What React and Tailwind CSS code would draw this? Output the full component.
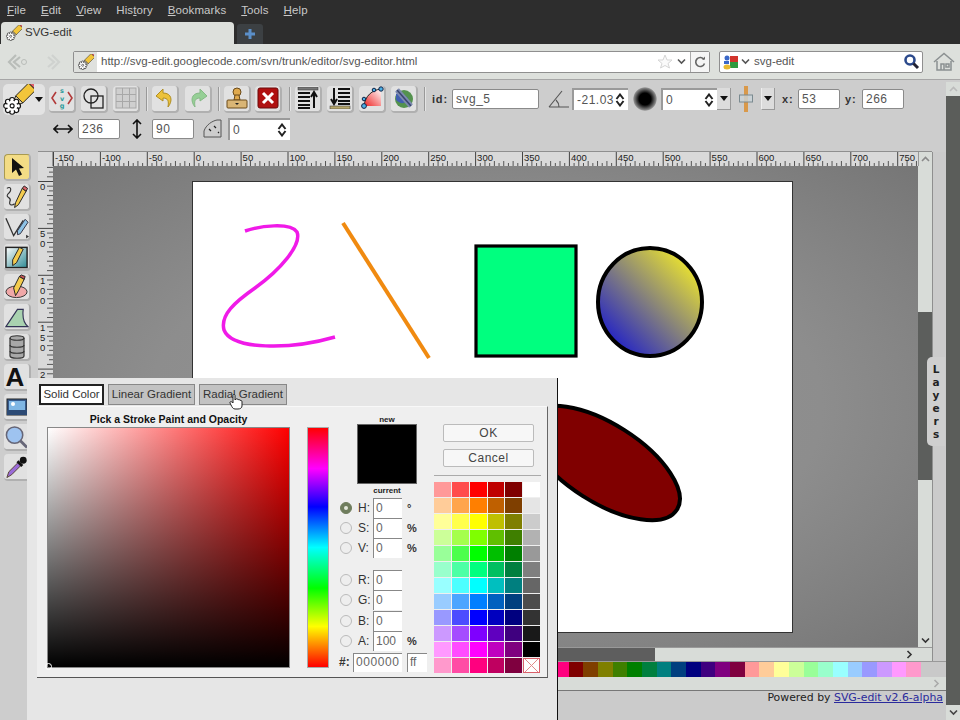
import React from "react";

const DEJAVU = "[font-family:DejaVu_Sans,sans-serif]";
const SANS = "[font-family:Liberation_Sans,Arial,sans-serif]";
const ARIAL = SANS;

const quick = [
  ["#ff9999","#ff4c4c","#ff0000","#bf0000","#7f0000","#ffffff"],
  ["#ffcc99","#ffa54c","#ff7f00","#bf6000","#7f3f00","#e5e5e5"],
  ["#ffff99","#ffff4c","#ffff00","#bfbf00","#7f7f00","#cccccc"],
  ["#ccff99","#a5ff4c","#7fff00","#60bf00","#3f7f00","#b2b2b2"],
  ["#99ff99","#4cff4c","#00ff00","#00bf00","#007f00","#999999"],
  ["#99ffcc","#4cffa5","#00ff7f","#00bf60","#007f3f","#7f7f7f"],
  ["#99ffff","#4cffff","#00ffff","#00bfbf","#007f7f","#666666"],
  ["#99ccff","#4ca5ff","#007fff","#0060bf","#003f7f","#4c4c4c"],
  ["#9999ff","#4c4cff","#0000ff","#0000bf","#00007f","#333333"],
  ["#cc99ff","#a54cff","#7f00ff","#6000bf","#3f007f","#191919"],
  ["#ff99ff","#ff4cff","#ff00ff","#bf00bf","#7f007f","#000000"],
  ["#ff99cc","#ff4ca5","#ff007f","#bf0060","#7f003f",null],
];

const paletteColors = ["#ff007f","#7f0000","#7f3f00","#7f7f00","#3f7f00","#007f00","#007f3f","#007f7f","#003f7f","#00007f","#3f007f","#7f007f","#7f003f","#ff9999","#ffcc99","#ffff99","#ccff99","#99ff99","#99ffcc","#99ffff","#99ccff","#9999ff","#cc99ff","#ff99ff","#ff99cc"];

function PencilLogo({ size = 16 }) {
  const petals = [0, 45, 90, 135, 180, 225, 270, 315];
  return (
    <svg width={size} height={size} viewBox="0 0 34 34">
      <g transform="rotate(45 21 13)">
        <rect x="16" y="-2" width="11" height="20" fill="#f2c53a" stroke="#222" strokeWidth="1" />
        <rect x="16" y="-7" width="11" height="5" rx="2" fill="#e0606a" stroke="#222" strokeWidth="1" />
        <path d="M16 18 L21.5 29 L27 18 Z" fill="#f6e3b8" stroke="#222" strokeWidth="1" />
        <path d="M20 26 L21.5 29 L23 26 Z" fill="#222" />
      </g>
      <g fill="#fff" stroke="#111" strokeWidth="1.3">
        {petals.map((a) => (
          <circle key={a} cx={10 + 6.5 * Math.cos((a * Math.PI) / 180)} cy={24 + 6.5 * Math.sin((a * Math.PI) / 180)} r="2.7" />
        ))}
      </g>
      <circle cx="10" cy="24" r="5.6" fill="#fff" />
      <circle cx="10" cy="24" r="2.2" fill="#fff" stroke="#111" strokeWidth="1.2" />
    </svg>
  );
}

function Tool({ children, active, className = "" }) {
  return (
    <div className={`w-[27px] h-[27px] shrink-0 flex items-center justify-center rounded-[4px] border-b-2 border-r-2 border-[#b0b0b0] ${active ? "bg-[#f3dc85] border-l border-t border-l-[#a99a50] border-t-[#a99a50]" : "bg-[#e1e1e1]"} ${className}`}>
      {children}
    </div>
  );
}

function Sep() {
  return <div className="w-px h-[24px] bg-[#999] border-r border-[#e4e4e4] box-content shrink-0" />;
}

function Field({ value, w, className = "" }) {
  return (
    <div className={`${w} h-[20px] shrink-0 bg-white border border-[#8a8a8a] rounded-[2px] flex items-center pl-[3px] pr-[3px] text-[12px] tracking-[0.5px] text-[#555] ${SANS} ${className}`}>
      <span className="flex-1 overflow-hidden whitespace-nowrap">{value}</span>
    </div>
  );
}

function SpinField({ value, w }) {
  return (
    <div className={`${w} h-[22px] shrink-0 bg-white border-l-2 border-t-2 border-[#9a9a9a] flex items-center pl-[3px] pr-[3px] text-[12px] tracking-[0.5px] text-[#555] ${SANS}`}>
      <span className="flex-1 overflow-hidden whitespace-nowrap">{value}</span>
      <Spin />
    </div>
  );
}

function Spin() {
  return (
    <svg width="10" height="14" viewBox="0 0 10 14" className="shrink-0">
      <path d="M1.5 6 L5 1.5 L8.5 6 M1.5 8 L5 12.5 L8.5 8" fill="none" stroke="#222" strokeWidth="2" />
    </svg>
  );
}

function DropBtn({ className = "" }) {
  return (
    <div className={`w-[14px] h-[22px] shrink-0 bg-[#dcdcdc] border-r border-b border-[#9a9a9a] flex items-center justify-center ${className}`}>
      <svg width="8" height="5" viewBox="0 0 8 5"><path d="M0 0H8L4 5Z" fill="#111" /></svg>
    </div>
  );
}

function Ruler() {
  const labels = [];
  for (let v = -150; v <= 750; v += 50) labels.push(v);
  const ticks = [];
  for (let i = 0; i < 190; i++) ticks.push(i);
  return (
    <svg width="865" height="14" className="block">
      {ticks.map((i) => {
        const x = 0.5 + i * 4.69;
        if (i % 10 === 0) return <line key={i} x1={x} x2={x} y1="0" y2="14" stroke="#444" />;
        return <line key={i} x1={x} x2={x} y1={i % 2 ? 11 : 9} y2="14" stroke="#555" />;
      })}
      {labels.map((v, n) => (
        <text key={v} x={2 + n * 46.9} y="9" fontSize="9.5" fill="#222" fontFamily="'Liberation Sans',sans-serif">{v}</text>
      ))}
    </svg>
  );
}

function VRuler() {
  const ticks = [];
  for (let i = 0; i < 48; i++) ticks.push(i);
  const labels = [["0", 0], ["50", 1], ["100", 2], ["150", 3], ["200", 4]];
  return (
    <svg width="15" height="230" className="block">
      {ticks.map((i) => {
        const y = 15.5 + (i - 3) * 4.69;
        if (i % 10 === 3) return <line key={i} y1={y} y2={y} x1="0" x2="15" stroke="#444" />;
        return <line key={i} y1={y} y2={y} x1={i % 2 ? 11 : 9} x2="15" stroke="#555" />;
      })}
      {labels.map(([s, n]) =>
        s.split("").map((c, k) => (
          <text key={s + k} x="2" y={24 + n * 46.9 + k * 10} fontSize="9.5" fill="#222" fontFamily="'Liberation Sans',sans-serif">{c}</text>
        ))
      )}
    </svg>
  );
}

function Chevron({ dir = "down", color = "#444" }) {
  const d = { down: "M1 2.5 L4.5 6 L8 2.5", up: "M1 6 L4.5 2.5 L8 6", right: "M2.5 1 L6 4.5 L2.5 8" }[dir];
  return (
    <svg width="9" height="9" viewBox="0 0 9 9"><path d={d} fill="none" stroke={color} strokeWidth="1.6" /></svg>
  );
}

const leftTools = [
  <svg key="a" width="18" height="20" viewBox="0 0 18 20"><path d="M4 1 L4 16 L8 12.5 L11 19 L14 17.5 L11 11.5 L16 11 Z" fill="#111" /></svg>,
  <svg key="b" width="26" height="26" viewBox="0 0 26 26"><path d="M3 4 C7 1 9 6 4 10 C1 14 9 13 6 18 C5 22 9 22 11 20" fill="none" stroke="#333" strokeWidth="1.2" /><path d="M12 19 L11 24 L15 21 L23 7 L19 4 Z" fill="#f3cb4e" stroke="#222" /><path d="M19 4 L23 7 L24.5 4 L21 1.5 Z" fill="#d9646a" stroke="#222" /></svg>,
  <svg key="c" width="26" height="26" viewBox="0 0 26 26"><path d="M2 4 L10 22 L20 6" fill="none" stroke="#333" strokeWidth="1.4" /><path d="M14 17 L22 5 L25 8 L17 20 L14 21 Z" fill="#8ec3e6" stroke="#334" /><path d="M23 21 L26 23 L23 25 Z" fill="#333" /></svg>,
  <svg key="d" width="26" height="26" viewBox="0 0 26 26"><defs><linearGradient id="rg" x1="0" y1="0" x2="1" y2="1"><stop offset="0" stopColor="#fff" /><stop offset="1" stopColor="#2e8a94" /></linearGradient></defs><rect x="2" y="3" width="22" height="21" fill="url(#rg)" stroke="#222" strokeWidth="1.5" /><path d="M9 22 L9 16 L16 3 L20 5 L13 19 Z" fill="#f3cb4e" stroke="#222" /></svg>,
  <svg key="e" width="26" height="26" viewBox="0 0 26 26"><ellipse cx="13" cy="18" rx="11" ry="6" fill="#f0a8a8" stroke="#333" /><path d="M12 22 L10 14 L16 2 L21 5 L15 17 Z" fill="#f3cb4e" stroke="#222" /><path d="M16 2 L21 5 L22 2 L18 0.5 Z" fill="#c9555a" stroke="#222" /></svg>,
  <svg key="f" width="26" height="26" viewBox="0 0 26 26"><path d="M2 23 L14 5 L20 5 C19 13 20 19 25 23 Z" fill="#a9d2b0" stroke="#335" strokeWidth="1.2" /></svg>,
  <svg key="g" width="20" height="26" viewBox="0 0 20 26"><path d="M3 4 C3 1 17 1 17 4 V22 C17 25 3 25 3 22 Z" fill="#a8a8a8" stroke="#333" strokeWidth="1.2" /><path d="M3 4 C3 7 17 7 17 4 M3 11 C3 14 17 14 17 11 M3 17 C3 20 17 20 17 17" fill="none" stroke="#333" strokeWidth="1.2" /></svg>,
  <span key="h" className={`${ARIAL} font-bold text-[26px] leading-none text-[#111] -ml-[3px]`}>A</span>,
  <svg key="i" width="22" height="18" viewBox="0 0 22 18"><rect x="1" y="1" width="20" height="16" fill="#375a8c" stroke="#222" /><rect x="3" y="3" width="16" height="9" fill="#7fb6e4" /><circle cx="7" cy="6" r="2" fill="#fff" /><rect x="1" y="12" width="20" height="5" fill="#2c4a74" /></svg>,
  <svg key="j" width="26" height="26" viewBox="0 0 26 26"><circle cx="11" cy="11" r="8.5" fill="#9ec3f0" stroke="#667" strokeWidth="1.6" /><path d="M17 17 L24 24" stroke="#667" strokeWidth="3" /></svg>,
  <svg key="k" width="26" height="26" viewBox="0 0 26 26"><path d="M3 24 L5 18 L15 8 L18 11 L8 21 Z" fill="#9a6bd8" stroke="#543" /><path d="M14 7 L19 12" stroke="#111" strokeWidth="3" /><circle cx="20" cy="6" r="3.6" fill="#111" /></svg>,
];

function TopBar() {
  const menu = [["F","ile"],["E","dit"],["V","iew"],["His","t","ory"],["B","ookmarks"],["T","ools"],["H","elp"]];
  return (
    <>
      <div className={`h-[22px] bg-[#2d2d2d] flex items-center pl-[7px] gap-[15px] text-[11.5px] tracking-[0.1px] text-[#c9c9c9] ${SANS}`}>
        {menu.map((m) => m.length === 3 ? (
          <span key={m[0]}>{m[0]}<span className="underline">{m[1]}</span>{m[2]}</span>
        ) : (
          <span key={m[0]}><span className="underline">{m[0]}</span>{m[1]}</span>
        ))}
      </div>
      <div className="h-[22px] bg-[#2d2d2d] flex items-end pl-[1px] gap-[3px]">
        <div className={`w-[233px] h-[22px] bg-[#dde0dc] rounded-t-[4px] flex items-center pl-[5px] gap-[3px] text-[11.5px] text-[#333] ${SANS}`}>
          <PencilLogo size={16} />
          <span>SVG-edit</span>
        </div>
        <div className="w-[26px] h-[20px] bg-[#3c4043] rounded-t-[3px] flex items-center justify-center">
          <svg width="12" height="12" viewBox="0 0 12 12"><path d="M6 1V11M1 6H11" stroke="#5b8fc9" strokeWidth="3" /></svg>
        </div>
      </div>
      <div className={`h-[36px] bg-[#dde0dc] border-b border-[#a6a6a6] flex items-center pl-[7px] text-[11.5px] ${SANS}`}>
        <svg width="21" height="18" viewBox="0 0 21 18"><path d="M9 2 L2 9 L9 16 M13 4 L7 9 L13 14" fill="none" stroke="#b9bdb9" strokeWidth="2.2" /><circle cx="17" cy="9" r="2.5" fill="none" stroke="#b9bdb9" /></svg>
        <svg width="21" height="18" viewBox="0 0 21 18" className="ml-[12px]"><path d="M12 2 L19 9 L12 16 M8 4 L14 9 L8 14" fill="none" stroke="#cfd2cf" strokeWidth="2.2" /></svg>
        <div className="ml-[12px] w-[637px] h-[22px] bg-white border border-[#8f8f8f] rounded-[2px] flex items-center">
          <div className="w-[23px] h-full bg-[#dfe1de] flex items-center justify-center"><PencilLogo size={16} /></div>
          <span className="ml-[4px] text-[#555] flex-1 whitespace-nowrap">http://svg-edit.googlecode.com/svn/trunk/editor/svg-editor.html</span>
          <svg width="16" height="15" viewBox="0 0 16 15"><path d="M8 1 L10 6 L15 6 L11 9.5 L12.5 14 L8 11.5 L3.5 14 L5 9.5 L1 6 L6 6 Z" fill="#fafafa" stroke="#d5d5d5" /></svg>
          <span className="ml-[4px] flex"><Chevron color="#555" /></span>
          <div className="ml-[4px] w-[19px] h-full border-l border-[#aaa] bg-[#f5f5f5] flex items-center justify-center">
            <svg width="12" height="12" viewBox="0 0 12 12"><path d="M10 3.5 A4.5 4.5 0 1 0 10.5 7.5" fill="none" stroke="#666" strokeWidth="1.6" /><path d="M8 3.5 H11 V0.5 Z" fill="#666" /></svg>
          </div>
        </div>
        <div className="ml-[9px] w-[204px] h-[22px] bg-white border border-[#8f8f8f] rounded-[2px] flex items-center pl-[3px] pr-[2px]">
          <svg width="16" height="16" viewBox="0 0 16 16"><rect x="7" y="2" width="8" height="10" fill="#d2342c" /><rect x="7" y="8" width="8" height="6" fill="#2f9a3f" /><circle cx="4" cy="4" r="2.5" fill="#3a68c8" /><ellipse cx="4" cy="13" rx="3.5" ry="2.5" fill="#e8b92e" /><rect x="1" y="7" width="5" height="3" fill="#3a68c8" /></svg>
          <span className="ml-[2px] flex"><Chevron color="#555" /></span>
          <span className="ml-[4px] text-[#555] flex-1">svg-edit</span>
          <svg width="17" height="17" viewBox="0 0 17 17"><circle cx="7" cy="7" r="4.5" fill="#fff" stroke="#2c4a8c" strokeWidth="2.6" /><path d="M10.5 10.5 L15 15" stroke="#223" strokeWidth="3" /></svg>
        </div>
        <svg width="22" height="20" viewBox="0 0 22 20" className="ml-[10px]"><path d="M1 10 L11 1.5 L21 10 M4 9 V18 H18 V9 M8 18 V12 H11 V18 M13 12 H16 V15 H13 Z" fill="none" stroke="#8b9091" strokeWidth="1.5" /></svg>
      </div>
    </>
  );
}

function Toolbars() {
  return (
    <div className={`h-[72px] flex flex-col text-[12px] ${SANS}`}>
      <div className="h-[36px] flex items-center pl-[3px] pt-[2px]">
        <div className="w-[42px] h-[31px] bg-[#e3e3e3] rounded-[5px] flex items-center shrink-0 mr-[4px]">
          <PencilLogo size={31} />
          <svg width="8" height="5" viewBox="0 0 8 5" className="ml-[1px]"><path d="M0 0H8L4 5Z" fill="#111" /></svg>
        </div>
        <Tool className="mr-[5px]">
          <svg width="24" height="24" viewBox="0 0 24 24"><path d="M6 6 L2 12 L6 18" fill="none" stroke="#b23a3a" strokeWidth="1.6" /><path d="M18 6 L22 12 L18 18" fill="none" stroke="#b23a3a" strokeWidth="1.6" /><text x="12" y="7" textAnchor="middle" fontSize="6.5" fontWeight="700" fill="#2a9a9a" fontFamily="'DejaVu Sans',sans-serif">s</text><text x="12" y="14.5" textAnchor="middle" fontSize="6.5" fontWeight="700" fill="#2a9a9a" fontFamily="'DejaVu Sans',sans-serif">v</text><text x="12" y="22" textAnchor="middle" fontSize="6.5" fontWeight="700" fill="#2a9a9a" fontFamily="'DejaVu Sans',sans-serif">g</text></svg>
        </Tool>
        <Tool className="mr-[5px]">
          <svg width="23" height="23" viewBox="0 0 23 23"><circle cx="9" cy="9" r="7" fill="none" stroke="#222" strokeWidth="1.3" /><rect x="9" y="9" width="12" height="12" fill="none" stroke="#222" strokeWidth="1.3" /></svg>
        </Tool>
        <Tool className="mr-[6px]">
          <svg width="22" height="22" viewBox="0 0 22 22"><rect x="1" y="1" width="20" height="20" fill="#cfcfcf" stroke="#a8a8a8" /><path d="M1 7.5H21M1 14.5H21M7.5 1V21M14.5 1V21" stroke="#a8a8a8" /></svg>
        </Tool>
        <Sep />
        <Tool className="ml-[4px] mr-[6px]">
          <svg width="22" height="22" viewBox="0 0 22 22"><path d="M9 2 L2 9 L9 14 V11 C14 11 15 14 14 20 C19 14 18 6 9 6 Z" fill="#ecc23a" stroke="#b08e22" /></svg>
        </Tool>
        <Tool className="mr-[6px]">
          <svg width="22" height="22" viewBox="0 0 22 22"><path d="M13 2 L20 9 L13 14 V11 C8 11 7 14 8 20 C3 14 4 6 13 6 Z" fill="#96cf96" stroke="#86b986" /></svg>
        </Tool>
        <Sep />
        <Tool className="ml-[4px] mr-[4px]">
          <svg width="24" height="24" viewBox="0 0 24 24"><circle cx="12" cy="6" r="4" fill="#dfa94e" stroke="#6a4a1a" /><path d="M10 9 L9 14 H15 L14 9 Z" fill="#dfa94e" stroke="#6a4a1a" /><rect x="2" y="14" width="20" height="8" rx="1" fill="#d9b575" stroke="#6a4a1a" /><path d="M10 17 H14 L12 19 Z" fill="#222" /></svg>
        </Tool>
        <Tool className="mr-[7px]">
          <svg width="22" height="22" viewBox="0 0 22 22"><rect x="1" y="1" width="20" height="20" rx="2" fill="#b01010" stroke="#6a0a0a" /><path d="M6 6 L16 16 M16 6 L6 16" stroke="#fff" strokeWidth="3" /></svg>
        </Tool>
        <Sep />
        <Tool className="ml-[4px] mr-[5px]">
          <svg width="22" height="22" viewBox="0 0 22 22"><rect x="1" y="0" width="20" height="3" fill="#777" stroke="#333" strokeWidth=".5" /><path d="M1 6H13M1 10H13M1 14H13M1 18H13M1 21H13" stroke="#111" strokeWidth="1.8" /><path d="M17 21 V7 M14 10 L17 5 L20 10" fill="none" stroke="#111" strokeWidth="2" /></svg>
        </Tool>
        <Tool className="mr-[5px]">
          <svg width="22" height="22" viewBox="0 0 22 22"><rect x="1" y="19" width="20" height="3" fill="#b5a56a" stroke="#333" strokeWidth=".5" /><path d="M9 2H21M9 6H21M9 10H21M9 14H21M9 17H21" stroke="#111" strokeWidth="1.8" /><path d="M5 1 V15 M2 12 L5 17 L8 12" fill="none" stroke="#111" strokeWidth="2" /></svg>
        </Tool>
        <Tool className="mr-[5px]">
          <svg width="24" height="24" viewBox="0 0 24 24"><defs><linearGradient id="pg" x1="0" y1="1" x2="1" y2="0"><stop offset="0" stopColor="#e22" /><stop offset="1" stopColor="#fff" /></linearGradient></defs><path d="M4 20 C5 10 12 4 21 3 L21 20 Z" fill="url(#pg)" /><path d="M4 20 C5 10 12 4 21 3" fill="none" stroke="#222" /><circle cx="4" cy="20" r="2.4" fill="#4bb0e6" stroke="#124" /><circle cx="4" cy="13" r="1.8" fill="#4bb0e6" stroke="#124" /><circle cx="14" cy="4" r="1.8" fill="#4bb0e6" stroke="#124" /><circle cx="21" cy="3" r="2.2" fill="#4bb0e6" stroke="#124" /></svg>
        </Tool>
        <Tool className="mr-[6px]">
          <svg width="24" height="24" viewBox="0 0 24 24"><circle cx="12" cy="13" r="9" fill="#54924e" /><path d="M4 8 C9 5 12 10 16 12 C14 19 8 18 4 14 Z" fill="#4260b0" /><path d="M5 4 L19 20" stroke="#7d8ab0" strokeWidth="5" /><path d="M5 4 L19 20" stroke="#39456e" strokeWidth="1.5" /></svg>
        </Tool>
        <Sep />
        <span className="ml-[6px] w-[20px] text-[#333] font-bold text-[11px] tracking-[0.8px] shrink-0">id:</span>
        <Field value="svg_5" w="w-[87px]" />
        <svg width="22" height="20" viewBox="0 0 22 20" className="ml-[9px] shrink-0"><path d="M1 18 L14 2 M1 18 H21 M11 18 C11 15 10 13 8 11" fill="none" stroke="#555" strokeWidth="1.1" /></svg>
        <div className="ml-[2px]"><SpinField value="-21.03" w="w-[56px]" /></div>
        <div className="ml-[5px] w-[24px] h-[24px] rounded-full bg-[radial-gradient(circle,#000_35%,#888_65%,transparent_72%)] shrink-0" />
        <div className="ml-[4px]"><SpinField value="0" w="w-[56px]" /></div>
        <DropBtn />
        <svg width="14" height="26" viewBox="0 0 14 26" className="ml-[8px] shrink-0"><rect x="5" y="0" width="4" height="26" fill="#d9994a" /><rect x="0.5" y="9" width="13" height="7" fill="#c9d3d8" fillOpacity=".8" stroke="#7a8a90" /></svg>
        <DropBtn className="ml-[8px] border-l border-l-[#eee]" />
        <span className="ml-[7px] w-[16px] text-[#333] font-bold text-[11px] tracking-[0.8px] shrink-0">x:</span>
        <Field value="53" w="w-[42px]" />
        <span className="ml-[5px] w-[17px] text-[#333] font-bold text-[11px] tracking-[0.8px] shrink-0">y:</span>
        <Field value="266" w="w-[42px]" />
      </div>
      <div className="h-[24px] flex items-center pl-[53px] pt-[1px]">
        <svg width="20" height="10" viewBox="0 0 20 10" className="shrink-0"><path d="M1 5H19 M5 1 L1 5 L5 9 M15 1 L19 5 L15 9" fill="none" stroke="#111" strokeWidth="1.6" /></svg>
        <Field value="236" w="w-[42px]" className="ml-[5px]" />
        <svg width="10" height="20" viewBox="0 0 10 20" className="ml-[12px] shrink-0"><path d="M5 1V19 M1 5 L5 1 L9 5 M1 15 L5 19 L9 15" fill="none" stroke="#111" strokeWidth="1.6" /></svg>
        <Field value="90" w="w-[42px]" className="ml-[10px]" />
        <svg width="19" height="19" viewBox="0 0 19 19" className="ml-[9px] shrink-0"><path d="M1 18 V12 C3 6 9 2 14 1 L18 1 V18 Z" fill="none" stroke="#555" /><path d="M6 10 L8 12 M11 7 L13 9 M15 13 L16 14" stroke="#222" strokeWidth="1.2" /></svg>
        <div className="ml-[6px]"><SpinField value="0" w="w-[62px]" /></div>
      </div>
    </div>
  );
}

function Sheet() {
  return (
    <div className="absolute left-[139px] top-[15px] w-[601px] h-[452px] bg-white border border-[#333]">
      <svg width="599" height="450" viewBox="193 182 599 450" className="block">
        <defs>
          <linearGradient id="cg" x1="0" y1="1" x2="1" y2="0">
            <stop offset="0.12" stopColor="#2020c8" />
            <stop offset="0.9" stopColor="#f2ea2a" />
          </linearGradient>
        </defs>
        <path d="M245 231 C260 226 290 222 297 232 C302 245 280 270 255 288 C235 302 220 315 224 330 C232 350 290 350 335 337" fill="none" stroke="#f01ae8" strokeWidth="3.5" />
        <line x1="343" y1="223" x2="429" y2="358" stroke="#f08a10" strokeWidth="4" />
        <rect x="476" y="246" width="100" height="110" fill="#00ff7f" stroke="#000" strokeWidth="3.2" />
        <ellipse cx="650" cy="302" rx="52" ry="54" fill="url(#cg)" stroke="#000" strokeWidth="4" />
        <ellipse cx="603.5" cy="463" rx="87" ry="39" transform="rotate(32.5 603.5 463)" fill="#800000" stroke="#000" strokeWidth="4" />
      </svg>
    </div>
  );
}

function Workspace() {
  return (
    <div className="flex h-[509px] shrink-0">
      <div className="w-[38px] shrink-0 flex flex-col items-start pl-[4px] pt-[2px] gap-[3px]">
        {leftTools.map((t, i) => (
          <Tool key={i} active={i === 0}>{t}</Tool>
        ))}
      </div>
      <div className="w-[894px] shrink-0 flex flex-col">
        <div className="h-[14px] flex bg-[#d9d9d9] border-t border-[#8f8f8f] box-content -mt-px">
          <div className="w-[15px] shrink-0 border-r border-[#999]" />
          <div className="w-[865px] overflow-hidden shrink-0"><Ruler /></div>
          <div className="w-[14px] shrink-0 bg-[#d8dcd8] border-l border-[#999] flex justify-center items-center"><Chevron dir="up" color="#8a8a8a" /></div>
        </div>
        <div className="flex-1 flex min-h-0">
          <div className="w-[15px] shrink-0 bg-[#d9d9d9] overflow-hidden"><VRuler /></div>
          <div className="w-[865px] shrink-0 relative overflow-hidden bg-[radial-gradient(ellipse_at_center,#959595_0%,#8d8d8d_55%,#767676_100%)]">
            <Sheet />
          </div>
          <div className="w-[14px] shrink-0 flex flex-col">
            <div className="h-[146px] bg-[#d8dcd8]" />
            <div className="h-[168px] bg-[#5c5e5c]" />
            <div className="flex-1 bg-[#d8dcd8] flex items-end justify-center pb-[2px]"><Chevron color="#333" /></div>
          </div>
        </div>
        <div className="h-[14px] shrink-0 flex bg-[#d8dcd8] border-t border-[#999] pl-[519px]">
          <div className="w-[98px] bg-[#5e5e5e]" />
          <div className="flex-1 flex justify-end items-center pr-[18px]"><Chevron dir="right" color="#333" /></div>
        </div>
      </div>
      <div className="w-[14px] shrink-0 relative bg-[#cbcbcb] border-l border-[#8f8f8f]">
        <div className={`absolute -left-[6px] top-[205px] w-[18px] h-[89px] bg-[#cfcfcf] rounded-l-[5px] flex flex-col items-center justify-center text-[10.5px] leading-[13px] font-bold text-[#222] ${DEJAVU}`}>
          {"Layers".split("").map((c, i) => <span key={i}>{c}</span>)}
        </div>
      </div>
    </div>
  );
}

function BottomBars() {
  return (
    <div className="flex-1 ml-[38px] flex flex-col">
      <div className="h-[16px] shrink-0 flex justify-end bg-[#c9c9c9] pr-[25px] border-t border-[#999]">
        {paletteColors.map((c, i) => (
          <div key={i} className="w-[14.7px] h-full shrink-0" style={{ backgroundColor: c }} />
        ))}
      </div>
      <div className="h-[14px] shrink-0 bg-[#d8dcd8] border-b border-[#777] flex justify-end items-center pr-[5px]"><Chevron dir="right" color="#aaa" /></div>
      <div className={`flex-1 bg-[#cbcbcb] flex justify-end pr-[3px] text-[10.9px] leading-[14px] text-[#222] whitespace-nowrap ${DEJAVU}`}>
        <span>Powered by <span className="underline text-[#2a2a9c]">SVG-edit v2.6-alpha</span></span>
      </div>
    </div>
  );
}

function Radio({ on }) {
  return (
    <div className={`w-[12px] h-[12px] rounded-full shrink-0 flex items-center justify-center border ${on ? "bg-[#6f7d5d] border-[#6f7d5d]" : "bg-[#eeeeee] border-[#bbb]"}`}>
      {on && <div className="w-[4px] h-[4px] rounded-full bg-[#e4e8dc]" />}
    </div>
  );
}

function PickRow({ label, value, unit, on, className = "" }) {
  return (
    <div className={`h-[20px] flex items-center text-[12px] text-[#333] ${ARIAL} ${className}`}>
      <Radio on={on} />
      <span className="ml-[6px] w-[15px] shrink-0">{label}</span>
      <div className="w-[29px] h-[20px] shrink-0 bg-white border-l border-t border-[#888] pl-[2px] text-[#666] leading-[18px]">{value}</div>
      {unit && <span className="ml-[5px] font-bold text-[11px]">{unit}</span>}
    </div>
  );
}

function Dialog() {
  const tabBase = `h-[21px] flex items-center justify-center whitespace-nowrap text-[11.5px] text-[#333] ${SANS}`;
  return (
    <div className="absolute left-[27px] top-[378px] w-[531px] h-[342px] bg-[#e6e6e6] border-r border-[#111]">
      <div className="flex items-start pl-[12px] pt-[6px] h-[28px] gap-[4px]">
        <div className={`${tabBase} w-[65px] bg-white border-2 border-[#222]`}>Solid Color</div>
        <div className={`${tabBase} w-[87px] bg-[#c2c2c2] border border-[#888]`}>Linear Gradient</div>
        <div className={`${tabBase} w-[88px] bg-[#c2c2c2] border border-[#888]`}>Radial Gradient</div>
      </div>
      <div className="ml-[10px] w-[511px] h-[272px] bg-[#efefef] border-t border-[#f8f8f8] border-r border-b border-r-[#666] border-b-[#555] flex">
        <div className="ml-[10px] w-[243px] shrink-0 flex flex-col">
          <div className={`h-[20px] pt-[6px] text-center text-[10.5px] leading-[13px] font-bold text-[#111] whitespace-nowrap ${ARIAL}`}>Pick a Stroke Paint and Opacity</div>
          <div className="h-[241px] border border-[#888] bg-[linear-gradient(to_top,#000,rgba(0,0,0,0)),linear-gradient(to_right,#fff,#f00)] relative">
            <div className="absolute -left-[3px] -bottom-[3px] w-[7px] h-[7px] rounded-full border border-white" />
          </div>
        </div>
        <div className="ml-[17px] mt-[20px] w-[22px] h-[241px] shrink-0 border border-[#aaa] bg-[linear-gradient(to_bottom,#f00,#f0f_17%,#00f_33%,#0ff_50%,#0f0_67%,#ff0_83%,#f00)]" />
        <div className="ml-[8px] w-[94px] shrink-0 flex flex-col">
          <div className={`h-[17px] pt-[8px] pl-[20px] w-[80px] text-center text-[8px] leading-[9px] font-bold text-[#222] ${ARIAL}`}>new</div>
          <div className="ml-[20px] w-[60px] h-[60px] bg-black border border-[#666]" />
          <div className={`h-[13px] pt-[2px] pl-[20px] w-[80px] text-center text-[8px] leading-[10px] font-bold text-[#222] ${ARIAL}`}>current</div>
          <PickRow label="H:" value="0" unit="°" on className="ml-[3px] mt-[1px]" />
          <PickRow label="S:" value="0" unit="%" className="ml-[3px]" />
          <PickRow label="V:" value="0" unit="%" className="ml-[3px]" />
          <PickRow label="R:" value="0" className="ml-[3px] mt-[12px]" />
          <PickRow label="G:" value="0" className="ml-[3px]" />
          <PickRow label="B:" value="0" className="ml-[3px] mt-[1px]" />
          <PickRow label="A:" value="100" unit="%" className="ml-[3px]" />
          <div className={`h-[20px] mt-[1px] flex items-center text-[12px] text-[#333] ${ARIAL}`}>
            <span className="ml-[2px] w-[14px] font-bold shrink-0">#:</span>
            <div className="w-[49px] h-[19px] shrink-0 bg-white border-l border-t border-[#888] pl-[2px] tracking-[0.6px] text-[#666] leading-[17px]">000000</div>
            <div className="ml-[5px] w-[20px] h-[19px] shrink-0 bg-white border-l border-t border-[#888] pl-[2px] text-[#666] leading-[17px]">ff</div>
          </div>
        </div>
        <div className="ml-[3px] w-[108px] shrink-0 flex flex-col">
          <div className={`ml-[9px] mt-[17px] w-[91px] h-[18px] bg-[#f7f7f7] border border-[#bbb] rounded-[2px] flex items-center justify-center text-[12px] tracking-[0.5px] text-[#444] ${SANS}`}>OK</div>
          <div className={`ml-[9px] mt-[7px] w-[91px] h-[18px] bg-[#f7f7f7] border border-[#bbb] rounded-[2px] flex items-center justify-center text-[12px] tracking-[0.5px] text-[#444] ${SANS}`}>Cancel</div>
          <div className="mt-[8px] w-[107px] h-px bg-[#aaa]" />
          <div className="mt-[6px] grid grid-cols-6 w-[106px] gap-px">
            {quick.flat().map((c, i) =>
              c ? (
                <div key={i} className="h-[15px]" style={{ backgroundColor: c }} />
              ) : (
                <div key={i} className="h-[15px] bg-white border border-[#d9606a] flex items-center justify-center">
                  <svg width="13" height="13" viewBox="0 0 13 13"><path d="M0 0L13 13M13 0L0 13" stroke="#e08a8a" strokeWidth="1" /></svg>
                </div>
              )
            )}
          </div>
        </div>
      </div>
    </div>
  );
}

function Cursor() {
  return (
    <svg width="16" height="17" viewBox="0 0 16 17" className="absolute left-[228px] top-[393px]">
      <path d="M5 8 V2.5 C5 1 7 1 7 2.5 V7 L8 6 C9 5.5 10 6 10 7 C11 6 12 6.5 12 7.5 C13 7 14 7.5 14 9 V13 C14 15 12 16 10 16 H7 C5 16 4 14 3 12 L2 10 C1.5 8.5 3.5 8 5 10 Z" fill="#fff" stroke="#222" strokeWidth="1" />
    </svg>
  );
}

export default function App() {
  return (
    <div className="relative w-[960px] h-[720px] overflow-hidden flex flex-col bg-[#cdcdcd] [font-family:Liberation_Sans,Arial,sans-serif]">
      <TopBar />
      <div className="flex-1 flex min-h-0">
        <div className="w-[946px] shrink-0 flex flex-col">
          <Toolbars />
          <Workspace />
          <BottomBars />
        </div>
        <div className="w-[14px] shrink-0 flex flex-col">
          <div className="h-[14px] mt-[2px] bg-[#d8dcd8] flex items-center justify-center"><Chevron dir="up" color="#bbb" /></div>
          <div className="flex-1 bg-[#5b5d5a]" />
          <div className="h-[15px] bg-[#d8dcd8] flex items-center justify-center"><Chevron color="#444" /></div>
        </div>
      </div>
      <Dialog />
      <Cursor />
    </div>
  );
}
